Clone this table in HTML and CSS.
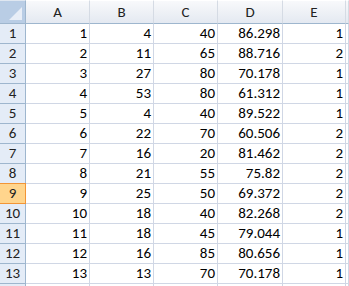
FILE: index.html
```html
<!DOCTYPE html>
<html lang="en">
<head>
    <meta charset="UTF-8">
    <title>Sheet1</title>
    <link rel="stylesheet" href="styles.css">
</head>
<body>
    <div class="sheet">
        <div class="corner"><span class="corner-tri"></span></div>
        <div class="col-head">A</div>
        <div class="col-head">B</div>
        <div class="col-head">C</div>
        <div class="col-head">D</div>
        <div class="col-head">E</div>
        <div class="col-head col-rest"></div>

        <div class="row-head">1</div><div class="cell">1</div><div class="cell">4</div><div class="cell">40</div><div class="cell">86.298</div><div class="cell">1</div><div class="cell"></div>
        <div class="row-head">2</div><div class="cell">2</div><div class="cell">11</div><div class="cell">65</div><div class="cell">88.716</div><div class="cell">2</div><div class="cell"></div>
        <div class="row-head">3</div><div class="cell">3</div><div class="cell">27</div><div class="cell">80</div><div class="cell">70.178</div><div class="cell">1</div><div class="cell"></div>
        <div class="row-head">4</div><div class="cell">4</div><div class="cell">53</div><div class="cell">80</div><div class="cell">61.312</div><div class="cell">1</div><div class="cell"></div>
        <div class="row-head">5</div><div class="cell">5</div><div class="cell">4</div><div class="cell">40</div><div class="cell">89.522</div><div class="cell">1</div><div class="cell"></div>
        <div class="row-head">6</div><div class="cell">6</div><div class="cell">22</div><div class="cell">70</div><div class="cell">60.506</div><div class="cell">2</div><div class="cell"></div>
        <div class="row-head">7</div><div class="cell">7</div><div class="cell">16</div><div class="cell">20</div><div class="cell">81.462</div><div class="cell">2</div><div class="cell"></div>
        <div class="row-head">8</div><div class="cell">8</div><div class="cell">21</div><div class="cell">55</div><div class="cell">75.82</div><div class="cell">2</div><div class="cell"></div>
        <div class="row-head selected">9</div><div class="cell">9</div><div class="cell">25</div><div class="cell">50</div><div class="cell">69.372</div><div class="cell">2</div><div class="cell"></div>
        <div class="row-head">10</div><div class="cell">10</div><div class="cell">18</div><div class="cell">40</div><div class="cell">82.268</div><div class="cell">2</div><div class="cell"></div>
        <div class="row-head">11</div><div class="cell">11</div><div class="cell">18</div><div class="cell">45</div><div class="cell">79.044</div><div class="cell">1</div><div class="cell"></div>
        <div class="row-head">12</div><div class="cell">12</div><div class="cell">16</div><div class="cell">85</div><div class="cell">80.656</div><div class="cell">1</div><div class="cell"></div>
        <div class="row-head">13</div><div class="cell">13</div><div class="cell">13</div><div class="cell">70</div><div class="cell">70.178</div><div class="cell">1</div><div class="cell"></div>
        <div class="row-head"></div><div class="cell"></div><div class="cell"></div><div class="cell"></div><div class="cell"></div><div class="cell"></div><div class="cell"></div>
    </div>
</body>
</html>
```

FILE: styles.css
```css
body {
    margin: 0;
    background: #fff;
    font-family: Carlito, Lato, "Liberation Sans", sans-serif;
    font-size: 15px;
    color: #000;
    overflow: hidden;
}

.sheet {
    display: grid;
    grid-template-columns: 26px 64px 64px 64px 65px 63px 1fr;
    grid-template-rows: 24px repeat(14, 20px);
    width: 349px;
    height: 286px;
    overflow: hidden;
}

.sheet > div {
    box-sizing: border-box;
}

.corner {
    background: #b9cde5;
    border-right: 1px solid #9eb6ce;
    border-bottom: 1px solid #9eb6ce;
    border-top: 1px solid #dfe7f1;
    position: relative;
}

.corner-tri {
    position: absolute;
    right: 3px;
    bottom: 3px;
    width: 0;
    height: 0;
    border-left: 13px solid transparent;
    border-bottom: 13px solid #e8eef7;
}

.col-head {
    background: linear-gradient(#f8f9fb, #e4e9f1);
    border-top: 1px solid #fff;
    border-right: 1px solid #d5dbe4;
    border-bottom: 1px solid #9eb6ce;
    text-align: center;
    line-height: 22px;
    color: #222;
}

.row-head {
    background: #e4ecf7;
    border-right: 1px solid #9eb6ce;
    border-bottom: 1px solid #9eb6ce;
    text-align: center;
    line-height: 19px;
    color: #222;
}

.row-head.selected {
    background: #ffd58d;
    border-right-color: #f29536;
    border-bottom-color: #f29536;
    border-top: 1px solid #f29536;
    margin-top: -1px;
    line-height: 19px;
}

.cell {
    border-right: 1px solid #d0d7e5;
    border-bottom: 1px solid #d0d7e5;
    text-align: right;
    padding-right: 2px;
    line-height: 19px;
}
```
